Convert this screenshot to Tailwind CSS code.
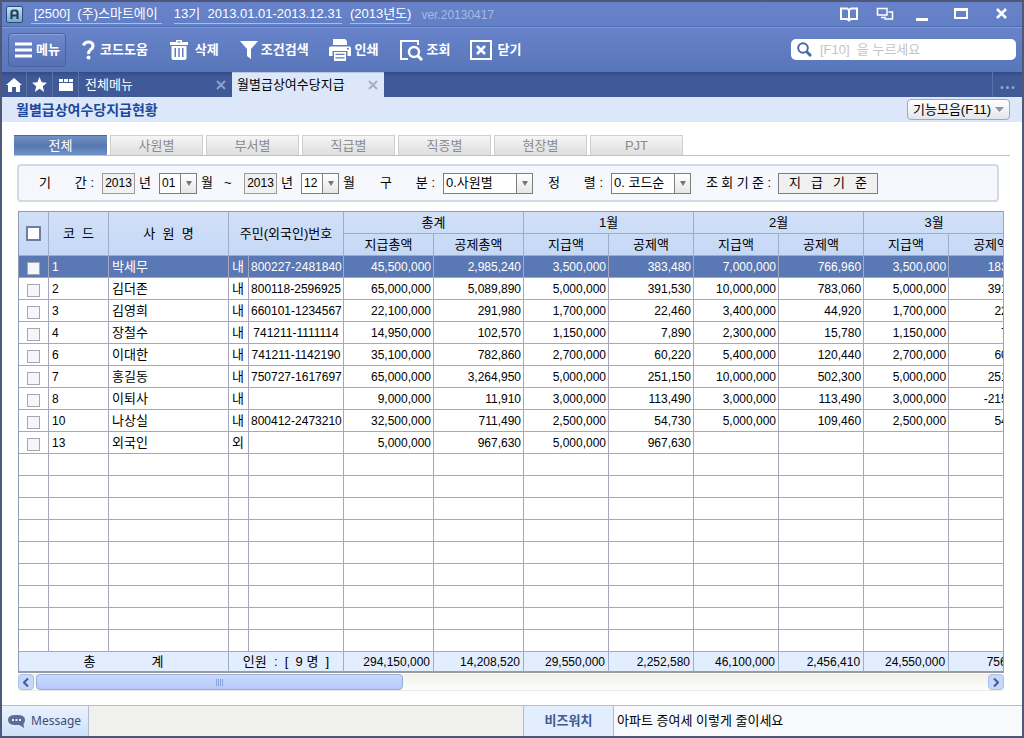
<!DOCTYPE html>
<html lang="ko">
<head>
<meta charset="utf-8">
<title>월별급상여수당지급현황</title>
<script src="https://cdn.jsdelivr.net/npm/@tailwindcss/browser@4"></script>
</head>
<body class="font-['Liberation_Sans','Noto_Sans_CJK_KR',sans-serif] text-[13px] leading-4 text-black">
<div class="flex min-h-screen flex-col overflow-hidden border-2 border-[#4f5878] bg-white">

  <!-- Title bar -->
  <header class="flex h-6 items-center bg-linear-to-b from-[#6782c8] to-[#6280c6] pl-1 pr-[11px] text-white">
    <svg class="size-[17px]" viewBox="0 0 17 17" aria-hidden="true">
      <defs><linearGradient id="logo" x1="0" y1="0" x2="0" y2="1"><stop offset="0" stop-color="#cfe6f2"/><stop offset="1" stop-color="#69a9cf"/></linearGradient></defs>
      <rect x=".5" y=".5" width="16" height="16" rx="1.5" fill="url(#logo)" stroke="#2c4a78"/>
      <path d="M5.5 13V6.5Q5.500 4.500 7.500 4.500H9.500Q11.500 4.500 11.500 6.500V13M5.500 9.500H11.500" fill="none" stroke="#26405c" stroke-width="2.200"/>
    </svg>
    <h1 class="ml-2 flex items-center gap-2 whitespace-pre text-[13px] leading-4">
      <span class="mr-1 border-b border-[#a9bbe6] pb-px pl-[3px] pr-1 pt-[2px]">[2500]  (주)스마트에이</span>
      <span class="border-b border-[#a9bbe6] pb-px pt-[2px]">13기  2013.01.01-2013.12.31</span>
      <span class="border-b border-[#a9bbe6] pb-px pt-[2px]">(2013년도)</span>
      <span class="ml-[2px] pt-[2px] text-xs leading-4 font-normal text-[#a8b9e4]">ver.20130417</span>
    </h1>
    <div class="ml-auto flex items-center gap-[18px]">
      <button aria-label="도움말"><svg class="h-4 w-[18px]" viewBox="0 0 18 16" fill="none" stroke="#fff" stroke-width="2"><path d="M1 2.500H7L9 4L11 2.500H17V13H11L9 14.500L7 13H1ZM9 4V14"/></svg></button>
      <button aria-label="창 전환"><svg class="h-4 w-[18px]" viewBox="0 0 18 16" fill="none" stroke="#fff" stroke-width="1.500"><path d="M1.500 2.500H11V9H1.500ZM5 11.500H8M12.500 6H16.500V13H9V10.500"/></svg></button>
      <button aria-label="최소화"><svg class="h-4 w-5" viewBox="0 0 20 16"><path d="M4 12H16V15H4Z" fill="#fff"/></svg></button>
      <button aria-label="최대화"><svg class="h-4 w-5" viewBox="0 0 20 16"><path d="M4 2H18V13H4ZM6 5V11H16V5Z" fill="#fff" fill-rule="evenodd"/></svg></button>
      <button class="ml-[5px]" aria-label="창 닫기"><svg class="h-4 w-[18px]" viewBox="0 0 18 16"><path d="M4 3L13 12M13 3L4 12" stroke="#fff" stroke-width="2.500"/></svg></button>
    </div>
  </header>

  <!-- Toolbar -->
  <div class="flex h-[46px] items-center border-t border-[#4f6cb1] bg-linear-to-b from-[#6883ca] to-[#5876b9] pl-[6px] pr-[6px] font-bold text-white shadow-[inset_0_1px_0_#839bd8]">
    <button class="flex h-[34px] w-[58px] items-center gap-1 rounded border border-[#48619f] bg-linear-to-b from-[#6f89cd] to-[#5571b2] pl-[6px] shadow-[inset_0_1px_0_#8ea4dc]">
      <svg class="h-4 w-[17px]" viewBox="0 0 17 16"><path d="M0 2H17M0 8H17M0 14H17" stroke="#fff" stroke-width="3"/></svg>메뉴</button>
    <button class="ml-4 flex items-center gap-[5px]">
      <svg class="h-5 w-[13px]" viewBox="0 0 13 20"><path d="M1.500 5.500Q2.500 2 6.500 2Q11 2 11 6Q11 8 8.500 9.800Q6.500 11.200 6.500 14" fill="none" stroke="#fff" stroke-width="3"/><circle cx="6.500" cy="17.500" r="2" fill="#fff"/></svg>코드도움</button>
    <button class="ml-[22px] flex items-center gap-[7px]">
      <svg class="h-[22px] w-[18px]" viewBox="0 0 18 22"><path d="M0 3H6V1H12V3H18V6H0ZM1.500 7H16.500V19Q16.500 21 14.500 21H3.500Q1.500 21 1.500 19ZM4.500 9V18H6V9ZM8.250 9V18H9.750V9ZM12 9V18H13.500V9Z" fill="#fff" fill-rule="evenodd"/><path d="M7.500 2.500H10.500V3.500H7.500Z" fill="#6380c5"/></svg>삭제</button>
    <button class="ml-[21px] flex items-center gap-[3px]">
      <svg class="h-[18px] w-[18px]" viewBox="0 0 18 18"><path d="M0 0H18L11 8V18L7 15V8Z" fill="#fff"/></svg>조건검색</button>
    <button class="ml-5 flex items-center gap-1">
      <svg class="h-[22px] w-[22px]" viewBox="0 0 22 22" fill="#fff"><path d="M4 0H16L18 2V6H4Z"/><path d="M1.500 7.500H20.500Q22 7.500 22 9V17H18.500V12H3.500V17H0V9Q0 7.500 1.500 7.500Z"/><path d="M5 13H17V22H5ZM6.500 14.700V16H15.500V14.700ZM6.500 18.300V19.600H15.500V18.300Z" fill-rule="evenodd"/><circle cx="19" cy="9.700" r="1" fill="#6380c5"/></svg>인쇄</button>
    <button class="ml-[21px] flex items-center gap-1">
      <svg class="h-[22px] w-[23px]" viewBox="0 0 23 22" fill="none" stroke="#fff" stroke-width="2"><path d="M18 6V2H1V20H8"/><circle cx="14" cy="13" r="5" stroke-width="2.400"/><path d="M17.500 16.500L22 21" stroke-width="3"/></svg>조회</button>
    <button class="ml-5 flex items-center gap-[5px]">
      <svg class="h-[22px] w-[22px]" viewBox="0 0 22 22" fill="none" stroke="#fff"><path d="M1 2H21V20H1Z" stroke-width="2"/><path d="M7 7L15 15M15 7L7 15" stroke-width="2.500"/></svg>닫기</button>
    <label class="ml-auto flex h-[21px] w-[225px] items-center gap-2 rounded-[5px] bg-white pl-[6px] font-normal">
      <svg class="size-[15px]" viewBox="0 0 15 15" fill="none" stroke="#4a6aa5"><circle cx="6" cy="6" r="4.800" stroke-width="2"/><path d="M9.500 9.500L14 14" stroke-width="3"/></svg>
      <input class="min-w-0 flex-1 text-black outline-none placeholder:text-[#c4c4c4]" type="text" placeholder="[F10]  을 누르세요" aria-label="메뉴 검색">
    </label>
  </div>

  <!-- Open documents -->
  <nav class="flex h-[25px] bg-linear-to-b from-[#334b86] to-[#3f5a97] to-20% text-white">
    <button class="flex w-[25px] items-center justify-center border-r border-[#5971a9]" aria-label="홈"><svg class="h-[14px] w-4" viewBox="0 0 16 14"><path d="M8 0L16 7H14V14H10V9H6V14H2V7H0Z" fill="#fff"/></svg></button>
    <button class="flex w-[26px] items-center justify-center border-r border-[#5971a9]" aria-label="즐겨찾기"><svg class="size-[15px]" viewBox="0 0 16 16"><path d="M8 0L10.300 5.700L16 6L11.500 9.800L13 16L8 12.500L3 16L4.500 9.800L0 6L5.700 5.700Z" fill="#fff"/></svg></button>
    <button class="flex w-[26px] items-center justify-center border-r border-[#5971a9]" aria-label="메뉴 모음"><svg class="h-[13px] w-[14px]" viewBox="0 0 14 13"><path d="M0 1H4V4H0ZM5 1H9V4H5ZM10 1H14V4H10ZM0 5H14V13H0Z" fill="#fff"/></svg></button>
    <div class="flex w-[153px] items-center justify-between pl-[6px] pr-[6px]"><a href="#">전체메뉴</a>
      <button aria-label="전체메뉴 닫기"><svg class="size-[10px]" viewBox="0 0 10 10"><path d="M1 1L9 9M9 1L1 9" stroke="#8fa0c8" stroke-width="2"/></svg></button></div>
    <div class="flex w-[152px] items-center justify-between border-t border-[#b8c6df] bg-[#dce8fa] pl-[5px] pr-[6px] text-black"><a href="#" aria-current="page">월별급상여수당지급</a>
      <button aria-label="월별급상여수당지급 닫기"><svg class="size-[10px]" viewBox="0 0 10 10"><path d="M1 1L9 9M9 1L1 9" stroke="#a4afc2" stroke-width="2"/></svg></button></div>
    <button class="ml-auto flex w-[30px] items-center justify-center border-l border-[#5971a9] pt-[6px]" aria-label="더 보기"><svg class="h-[3px] w-[15px]" viewBox="0 0 15 3" fill="#94a5cc"><circle cx="2" cy="1.500" r="1.500"/><circle cx="7.500" cy="1.500" r="1.500"/><circle cx="13" cy="1.500" r="1.500"/></svg></button>
  </nav>

  <div class="flex h-[25px] items-center justify-between bg-[#dce8fa] pl-[14px] pr-3">
    <h2 class="text-sm font-bold text-[#20489c]">월별급상여수당지급현황</h2>
    <button class="flex h-[21px] w-[103px] items-center justify-center gap-1 rounded-sm border border-[#a3a9b5] bg-linear-to-b from-white to-[#e3e6ec] whitespace-nowrap">기능모음(F11)<svg class="h-[5px] w-[9px]" viewBox="0 0 9 5"><path d="M0 0H9L4.500 5Z" fill="#8b93a5"/></svg></button>
  </div>

  <main class="flex-1 pt-[13px]">
    <!-- Group tabs -->
    <div class="ml-3 mr-3 grid auto-cols-[93px] grid-flow-col gap-[3px] border-b border-[#c2c2c2] text-[#8b8b8b]" role="tablist">
      <button role="tab" aria-selected="true" class="h-5 border-t border-[#4a689e] bg-linear-to-b from-[#7391c6] via-[#5878af] to-[#6f93cb] text-white">전체</button>
      <button role="tab" class="h-5 border border-b-0 border-[#cfcfcf] bg-linear-to-b from-[#f6f6f6] to-[#dedede]">사원별</button>
      <button role="tab" class="h-5 border border-b-0 border-[#cfcfcf] bg-linear-to-b from-[#f6f6f6] to-[#dedede]">부서별</button>
      <button role="tab" class="h-5 border border-b-0 border-[#cfcfcf] bg-linear-to-b from-[#f6f6f6] to-[#dedede]">직급별</button>
      <button role="tab" class="h-5 border border-b-0 border-[#cfcfcf] bg-linear-to-b from-[#f6f6f6] to-[#dedede]">직종별</button>
      <button role="tab" class="h-5 border border-b-0 border-[#cfcfcf] bg-linear-to-b from-[#f6f6f6] to-[#dedede]">현장별</button>
      <button role="tab" class="h-5 border border-b-0 border-[#cfcfcf] bg-linear-to-b from-[#f6f6f6] to-[#dedede]">PJT</button>
    </div>

    <!-- Search conditions -->
    <form class="ml-[15px] mr-[23px] mt-2 flex h-[38px] items-center rounded-sm border-2 border-[#d3dae6] bg-linear-to-b from-[#f4f7fd] to-[#f6f8fc] pl-5 whitespace-nowrap">
      <label for="y1" class="flex w-[55px] justify-between"><span>기</span><span>간 :</span></label>
      <input id="y1" value="2013" readonly class="ml-2 h-[21px] w-[33px] border border-[#9c9c9c] bg-[#f0f0f0] text-center text-xs">
      <span class="ml-1 w-3">년</span>
      <span class="relative ml-2 h-[21px] w-[38px]">
        <select aria-label="시작 월" class="h-full w-full appearance-none border border-[#7f7f7f] bg-white pl-[2px] text-xs"><option>01</option></select>
        <span class="pointer-events-none absolute inset-y-px right-px flex w-4 items-center justify-center border-l border-[#7f7f7f] bg-linear-to-b from-white to-[#e6e6e6]"><svg class="h-[5px] w-[6px]" viewBox="0 0 6 5"><path d="M0 0H6L3 5Z" fill="#747474"/></svg></span>
      </span>
      <span class="ml-1 w-3">월</span>
      <span class="ml-[11px] w-2">~</span>
      <input aria-label="종료 연도" value="2013" readonly class="ml-3 h-[21px] w-[33px] border border-[#9c9c9c] bg-[#f0f0f0] text-center text-xs">
      <span class="ml-1 w-3">년</span>
      <span class="relative ml-2 h-[21px] w-[38px]">
        <select aria-label="종료 월" class="h-full w-full appearance-none border border-[#7f7f7f] bg-white pl-[2px] text-xs"><option>12</option></select>
        <span class="pointer-events-none absolute inset-y-px right-px flex w-4 items-center justify-center border-l border-[#7f7f7f] bg-linear-to-b from-white to-[#e6e6e6]"><svg class="h-[5px] w-[6px]" viewBox="0 0 6 5"><path d="M0 0H6L3 5Z" fill="#747474"/></svg></span>
      </span>
      <span class="ml-1 w-3">월</span>
      <label for="kind" class="ml-[25px] flex w-[55px] justify-between"><span>구</span><span>분 :</span></label>
      <span class="relative ml-2 h-[21px] w-[90px]">
        <select id="kind" class="h-full w-full appearance-none border border-[#7f7f7f] bg-white pl-[2px]"><option>0.사원별</option></select>
        <span class="pointer-events-none absolute inset-y-px right-px flex w-4 items-center justify-center border-l border-[#7f7f7f] bg-linear-to-b from-white to-[#e6e6e6]"><svg class="h-[5px] w-[6px]" viewBox="0 0 6 5"><path d="M0 0H6L3 5Z" fill="#747474"/></svg></span>
      </span>
      <label for="sort" class="ml-[15px] flex w-[55px] justify-between"><span>정</span><span>렬 :</span></label>
      <span class="relative ml-2 h-[21px] w-20">
        <select id="sort" class="h-full w-full appearance-none border border-[#7f7f7f] bg-white pl-[2px]"><option>0. 코드순</option></select>
        <span class="pointer-events-none absolute inset-y-px right-px flex w-4 items-center justify-center border-l border-[#7f7f7f] bg-linear-to-b from-white to-[#e6e6e6]"><svg class="h-[5px] w-[6px]" viewBox="0 0 6 5"><path d="M0 0H6L3 5Z" fill="#747474"/></svg></span>
      </span>
      <span class="ml-[15px] flex w-[65px] justify-between"><span>조</span><span>회</span><span>기</span><span>준</span><span>:</span></span>
      <button type="button" class="ml-[7px] flex h-[21px] w-[100px] items-center justify-between border border-[#7f7f7f] bg-[#f0f0f0] px-[10px]"><span>지</span><span>급</span><span>기</span><span>준</span></button>
    </form>

    <!-- Pay table -->
    <div class="ml-4 mr-[18px] mt-[9px] overflow-hidden border-r border-[#a2a2b6]">
      <table class="w-[1016px] table-fixed border-separate border-spacing-0 border-l border-t border-[#8f9bb8]">
        <colgroup>
          <col class="w-[30px]"><col class="w-[60px]"><col class="w-[120px]"><col class="w-[20px]"><col class="w-[95px]">
          <col class="w-[90px]"><col class="w-[90px]"><col class="w-[85px]"><col class="w-[85px]"><col class="w-[85px]"><col class="w-[85px]"><col class="w-[85px]"><col class="w-[85px]">
        </colgroup>
        <thead class="bg-linear-to-b from-[#d2e0f7] to-[#c4d8f6] whitespace-nowrap [&_th]:h-[22px] [&_th]:border-b [&_th]:border-r [&_th]:border-[#9daccb] [&_th]:p-0 [&_th]:font-normal">
          <tr>
            <th rowspan="2"><input type="checkbox" aria-label="모두 선택" class="block mx-auto size-[15px] appearance-none border-2 border-[#6d7ea3] bg-white"></th>
            <th rowspan="2">코&nbsp; 드</th><th rowspan="2">사&nbsp; 원&nbsp; 명</th><th rowspan="2" colspan="2">주민(외국인)번호</th>
            <th colspan="2">총계</th><th colspan="2">1월</th><th colspan="2">2월</th><th colspan="2"><span class="mr-[29px]">3월</span></th>
          </tr>
          <tr><th>지급총액</th><th>공제총액</th><th>지급액</th><th>공제액</th><th>지급액</th><th>공제액</th><th>지급액</th><th>공제액</th></tr>
        </thead>
        <tbody id="rows" class="whitespace-nowrap [&_td]:h-[22px] [&_td]:border-b [&_td]:border-r [&_td]:border-[#a6a6bc] [&_td]:py-0"></tbody>
        <tfoot class="bg-[#e2edfd] text-xs whitespace-nowrap [&_td]:h-[21px] [&_td]:border-b-2 [&_td]:border-r [&_td]:border-b-[#9b9b9b] [&_td]:border-r-[#9daccb] [&_td]:py-0 [&_td]:pr-[3px] [&_td]:text-right">
          <tr>
            <th colspan="3" class="border-r border-b-2 border-r-[#9daccb] border-b-[#9b9b9b] p-0 text-[13px] font-normal"><span class="mx-auto flex w-20 justify-between"><span>총</span><span>계</span></span></th>
            <th colspan="2" class="border-r border-b-2 border-r-[#9daccb] border-b-[#9b9b9b] p-0 text-[13px] font-normal">인원 &nbsp;: &nbsp;[ &nbsp;9 명 &nbsp;]</th>
            <td>294,150,000</td><td>14,208,520</td><td>29,550,000</td><td>2,252,580</td><td>46,100,000</td><td>2,456,410</td><td>24,550,000</td><td>756,920</td>
          </tr>
        </tfoot>
      </table>
    </div>

    <div class="mb-[14px] ml-4 mr-[18px] mt-px flex h-[17px] items-center border-b border-[#ebebe6] bg-linear-to-b from-[#f1f1ec] to-[#fdfdfb]">
      <button class="flex size-4 items-center justify-center rounded-sm border border-[#a9bfee] bg-[#c8d7fb]" aria-label="왼쪽으로"><svg class="h-[9px] w-[6px]" viewBox="0 0 6 9"><path d="M5 .5L1 4.500L5 8.500" fill="none" stroke="#3f5c8e" stroke-width="2"/></svg></button>
      <div class="ml-[2px] flex h-4 w-[367px] items-center justify-center gap-px rounded-sm border border-[#95abdc] bg-linear-to-b from-[#cbdafe] to-[#b6c9fa]">
        <i class="h-[7px] w-px bg-[#8aa4e2]"></i><i class="h-[7px] w-px bg-[#8aa4e2]"></i><i class="h-[7px] w-px bg-[#8aa4e2]"></i><i class="h-[7px] w-px bg-[#8aa4e2]"></i>
      </div>
      <button class="ml-auto flex size-4 items-center justify-center rounded-sm border border-[#a9bfee] bg-[#c8d7fb]" aria-label="오른쪽으로"><svg class="h-[9px] w-[6px]" viewBox="0 0 6 9"><path d="M1 .5L5 4.500L1 8.500" fill="none" stroke="#3f5c8e" stroke-width="2"/></svg></button>
    </div>
  </main>

  <!-- Status bar -->
  <footer class="flex h-[31px] border-t border-[#b9bdc9] bg-[#f0f0ee]">
    <button class="flex w-[87px] items-center gap-[6px] border-r border-[#b3bbcd] bg-linear-to-b from-[#eaf2fd] to-[#cfe0f8] pl-[6px] font-['Noto_Sans',sans-serif] text-xs text-[#3a4d78]">
      <svg class="h-[13px] w-[17px]" viewBox="0 0 17 13"><path d="M7.500 0H9.500Q17 0 17 5Q17 7.500 15.500 9L16 13L11.500 10H7.500Q0 10 0 5Q0 0 7.500 0Z" fill="#5b6c98"/><path d="M4 4H6V6H4ZM7.500 4H9.500V6H7.500ZM11 4H13V6H11Z" fill="#e6eefa"/></svg>Message</button>
    <div class="flex-1"></div>
    <strong class="flex w-[91px] items-center justify-center border-x border-[#b3bbcd] bg-[#e2edfd] text-[#41598c]">비즈워치</strong>
    <a href="#" class="flex w-[408px] items-center bg-[#f7f9fd] pl-[3px]">아파트 증여세 이렇게 줄이세요</a>
  </footer>
</div>

<script>
const people = [
  ['1','박세무','내','800227-2481840','45,500,000','2,985,240','3,500,000','383,480','7,000,000','766,960','3,500,000','183,480'],
  ['2','김더존','내','800118-2596925','65,000,000','5,089,890','5,000,000','391,530','10,000,000','783,060','5,000,000','391,530'],
  ['3','김영희','내','660101-1234567','22,100,000','291,980','1,700,000','22,460','3,400,000','44,920','1,700,000','22,460'],
  ['4','장철수','내','741211-1111114','14,950,000','102,570','1,150,000','7,890','2,300,000','15,780','1,150,000','7,890'],
  ['6','이대한','내','741211-1142190','35,100,000','782,860','2,700,000','60,220','5,400,000','120,440','2,700,000','60,220'],
  ['7','홍길동','내','750727-1617697','65,000,000','3,264,950','5,000,000','251,150','10,000,000','502,300','5,000,000','251,150'],
  ['8','이퇴사','내','','9,000,000','11,910','3,000,000','113,490','3,000,000','113,490','3,000,000','-215,070'],
  ['10','나상실','내','800412-2473210','32,500,000','711,490','2,500,000','54,730','5,000,000','109,460','2,500,000','54,730'],
  ['13','외국인','외','','5,000,000','967,630','5,000,000','967,630','','','','']
];
const ROWS = 18;
const body = document.getElementById('rows');
for (let r = 0; r < ROWS; r++) {
  const p = people[r];
  const tr = body.insertRow();
  if (r === 0) tr.className = 'bg-[#5a78b4] text-white';
  const pick = tr.insertCell();
  pick.className = 'px-0';
  if (p) pick.innerHTML = `<input type="checkbox" aria-label="${p[1]} 선택" class="mx-auto mt-1 block size-[13px] appearance-none border border-[#a7a7b3] bg-[#f5f6fa]">`;
  for (let c = 0; c < 12; c++) {
    const td = tr.insertCell();
    td.textContent = p ? p[c] : '';
    td.className = c === 0 ? 'pl-[3px] text-xs' : c < 3 ? 'px-[3px]' : c === 3 ? 'px-[2px] text-center text-xs' : 'pl-0 pr-[2px] text-right text-xs';
  }
}
</script>
</body>
</html>
